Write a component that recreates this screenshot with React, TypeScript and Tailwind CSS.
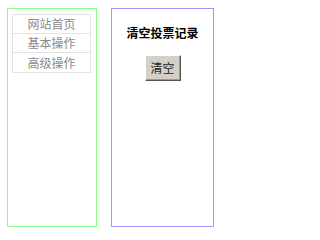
const menuItems = ['网站首页', '基本操作', '高级操作'];

export default function App() {
  return (
    <div className="flex items-start gap-[14px] pt-[8px] pl-[7px] bg-white w-[228px] h-[240px] font-['Liberation_Serif','Noto_Sans_CJK_SC',serif]">
      <div className="w-[90px] h-[219px] border border-[#88ff88] pt-[5px] pl-[4px]">
        <ul className="w-[79px] border border-[#e2e2e2]">
          {menuItems.map((item, index) => (
            <li
              key={index}
              className="h-[19px] flex items-center justify-center text-[12px] text-[#8a8a8a] border-b border-[#e2e2e2] last:border-b-0 font-['Noto_Sans_CJK_SC',sans-serif]"
            >
              {item}
            </li>
          ))}
        </ul>
      </div>

      <div className="w-[103px] h-[219px] border border-[#9999ff] flex flex-col items-center">
        <h3 className="mt-[16px] text-[12px] leading-[16px] font-bold text-black font-['Noto_Sans_CJK_SC',serif]">
          清空投票记录
        </h3>
        <button className="mt-[14px] w-[36px] h-[26px] bg-[#d4d0c8] text-[12px] text-[#222] border border-t-white border-l-white border-r-[#555] border-b-[#555] shadow-[inset_-1px_-1px_0_#999] font-['Noto_Sans_CJK_SC',sans-serif]">
          清空
        </button>
      </div>
    </div>
  );
}
